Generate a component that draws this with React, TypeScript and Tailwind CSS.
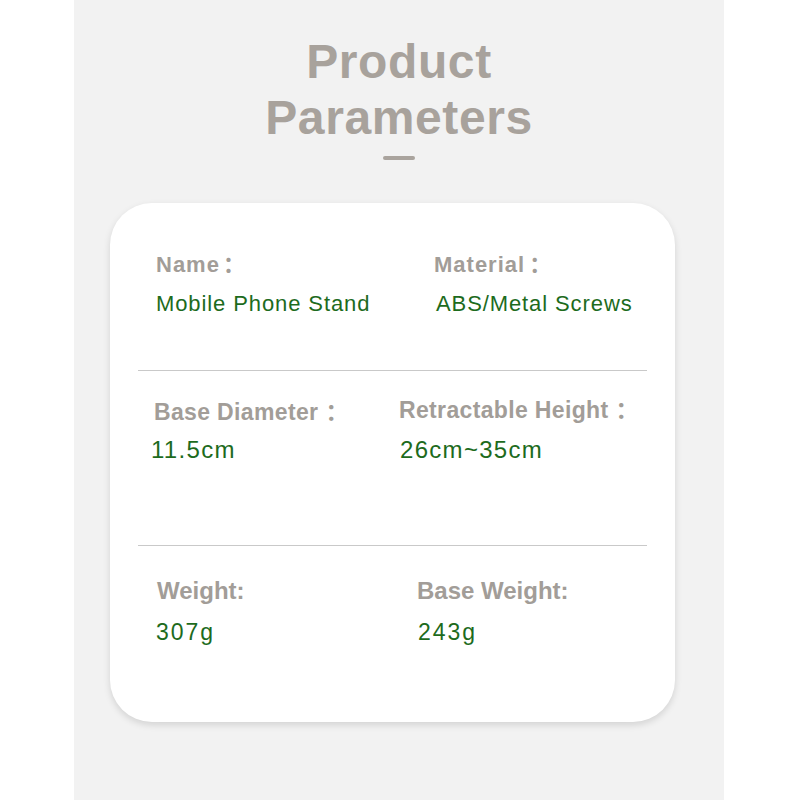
import React from "react";

const font = { fontFamily: '"Liberation Sans", Arial, sans-serif' };

function Label({ children, className = "" }: { children: React.ReactNode; className?: string }) {
  return (
    <div className={`leading-[24px] font-bold text-[#a29d98] whitespace-nowrap ${className}`}>
      {children}
    </div>
  );
}

function Value({ children, className = "" }: { children: React.ReactNode; className?: string }) {
  return (
    <div className={`leading-[24px] text-[#1d6b1d] whitespace-nowrap ${className}`}>
      {children}
    </div>
  );
}

function Colon({ className = "" }: { className?: string }) {
  return (
    <span className={`leading-[0] ${className}`} style={{ fontFamily: '"Noto Sans CJK SC", sans-serif' }}>
      ：
    </span>
  );
}

export default function App() {
  return (
    <div className="w-[800px] h-[800px] bg-white flex overflow-hidden" style={font}>
      <div className="ml-[74px] w-[650px] h-full bg-[#f2f2f2] flex flex-col items-center">
        <h1 className="mt-[34px] text-[48px] leading-[56px] font-bold text-[#a8a29c] text-center tracking-[0.6px]">
          Product
          <br />
          Parameters
        </h1>
        <div className="mt-[10px] w-[32px] h-[4px] rounded-full bg-[#aaa49e]" />
        <div className="self-start mt-[43px] ml-[36px] w-[565px] h-[519px] bg-white rounded-[42px] shadow-[0_3px_7px_rgba(0,0,0,0.13)] flex flex-col">
          {/* Row 1 */}
          <div className="h-[167px] flex">
            <div className="w-[324px] pl-[46px] pt-[50px]">
              <Label className="text-[22px] tracking-[1px]">
                Name<Colon className="ml-[3px]" />
              </Label>
              <Value className="mt-[15px] text-[22px] tracking-[0.9px]">Mobile Phone Stand</Value>
            </div>
            <div className="flex-1 pt-[50px]">
              <Label className="text-[22px] tracking-[1px]">
                Material<Colon className="ml-[4px]" />
              </Label>
              <Value className="mt-[15px] ml-[2px] text-[22px] tracking-[0.9px]">ABS/Metal Screws</Value>
            </div>
          </div>
          <div className="mx-[28px] h-[1px] bg-[#c9c9c9]" />
          {/* Row 2 */}
          <div className="h-[174px] flex">
            <div className="w-[289px] pl-[44px] pt-[29px]">
              <Label className="text-[23px] tracking-[0.35px]">
                Base Diameter<Colon className="ml-[7px]" />
              </Label>
              <Value className="mt-[14px] -ml-[3px] text-[24px] tracking-[1.3px]">11.5cm</Value>
            </div>
            <div className="flex-1 pt-[27px]">
              <Label className="text-[23px] tracking-[0.35px]">
                Retractable Height<Colon className="ml-[7px]" />
              </Label>
              <Value className="mt-[16px] ml-[1px] text-[24px] tracking-[1.3px]">26cm~35cm</Value>
            </div>
          </div>
          <div className="mx-[28px] h-[1px] bg-[#c9c9c9]" />
          {/* Row 3 */}
          <div className="flex-1 flex">
            <div className="w-[307px] pl-[47px] pt-[33px]">
              <Label className="text-[24px]">Weight:</Label>
              <Value className="mt-[17px] -ml-[1px] text-[23px] tracking-[2px]">307g</Value>
            </div>
            <div className="flex-1 pt-[33px]">
              <Label className="text-[24px]">Base Weight:</Label>
              <Value className="mt-[17px] ml-[1px] text-[23px] tracking-[2px]">243g</Value>
            </div>
          </div>
        </div>
      </div>
    </div>
  );
}
